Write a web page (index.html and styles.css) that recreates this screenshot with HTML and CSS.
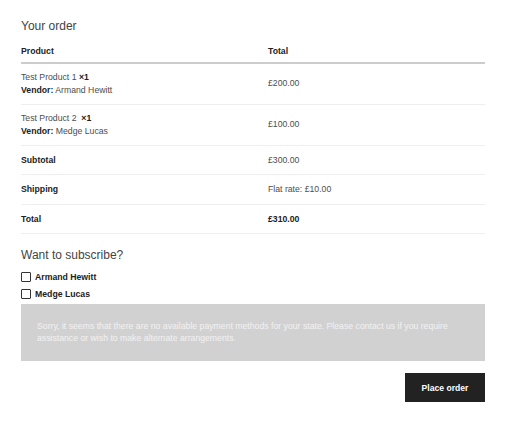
FILE: index.html
```html
<!DOCTYPE html>
<html lang="en">
<head>
<meta charset="utf-8">
<title>Your order</title>
<link rel="stylesheet" href="styles.css">
</head>
<body>
<div class="page">
  <h3 class="title">Your order</h3>
  <table class="order">
    <thead>
      <tr><th class="c1">Product</th><th class="c2">Total</th></tr>
    </thead>
    <tbody>
      <tr class="item">
        <td class="c1">Test Product 1&nbsp;<strong>×1</strong><br><strong>Vendor:</strong> Armand Hewitt</td>
        <td class="c2">£200.00</td>
      </tr>
      <tr class="item">
        <td class="c1">Test Product 2&nbsp;&nbsp;<strong>×1</strong><br><strong>Vendor:</strong> Medge Lucas</td>
        <td class="c2">£100.00</td>
      </tr>
      <tr>
        <th class="c1">Subtotal</th><td class="c2">£300.00</td>
      </tr>
      <tr>
        <th class="c1">Shipping</th><td class="c2">Flat rate: £10.00</td>
      </tr>
      <tr>
        <th class="c1">Total</th><td class="c2"><strong>£310.00</strong></td>
      </tr>
    </tbody>
  </table>
  <h3 class="title sub">Want to subscribe?</h3>
  <div class="checks">
    <label class="check"><span class="box"></span><span>Armand Hewitt</span></label>
    <label class="check"><span class="box"></span><span>Medge Lucas</span></label>
  </div>
  <div class="notice">Sorry, it seems that there are no available payment methods for your state. Please contact us if you require assistance or wish to make alternate arrangements.</div>
  <div class="actions">
    <button class="place">Place order</button>
  </div>
</div>
</body>
</html>
```
FILE: styles.css
```css
html, body {
  margin: 0;
  padding: 0;
  background: #fff;
}
body {
  font-family: "Liberation Sans", Arial, sans-serif;
  color: #4d4d4d;
  font-size: 8.7px;
}
.page {
  width: 464px;
  padding: 17px 0 0 21px;
}
.title {
  margin: 0;
  font-size: 12px;
  line-height: 18px;
  font-weight: 400;
  color: #444;
}
.order {
  width: 100%;
  border-collapse: collapse;
  margin-top: 2px;
}
.order th, .order td {
  text-align: left;
  padding: 8px 0;
  line-height: 12.5px;
  vertical-align: middle;
  border-bottom: 1px solid #eee;
}
.order .item td {
  padding: 7.5px 0 7.5px;
}
.order th {
  font-weight: 700;
  color: #222;
}
.order thead th {
  padding: 8px 0 4px;
  border-bottom: 2px solid #ccc;
}
.order .c1 {
  width: 247px;
}
.order strong {
  color: #222;
}
.sub {
  margin-top: 12px;
}
.checks {
  display: flex;
  flex-direction: column;
  margin-top: 4px;
}
.check {
  display: flex;
  align-items: center;
  height: 17px;
  font-weight: 700;
  color: #222;
}
.box {
  width: 8px;
  height: 8px;
  border: 1px solid #333;
  border-radius: 1px;
  margin-right: 4px;
}
.notice {
  margin-top: 2px;
  background: #d1d1d1;
  color: #f2f2f2;
  padding: 16px 16px 17px;
  line-height: 12px;
}
.actions {
  display: flex;
  justify-content: flex-end;
  margin-top: 12px;
}
.place {
  width: 80px;
  height: 29px;
  border: 0;
  background: #222;
  color: #fff;
  font-family: inherit;
  font-weight: 700;
  font-size: 8.6px;
  padding: 0;
}
```
